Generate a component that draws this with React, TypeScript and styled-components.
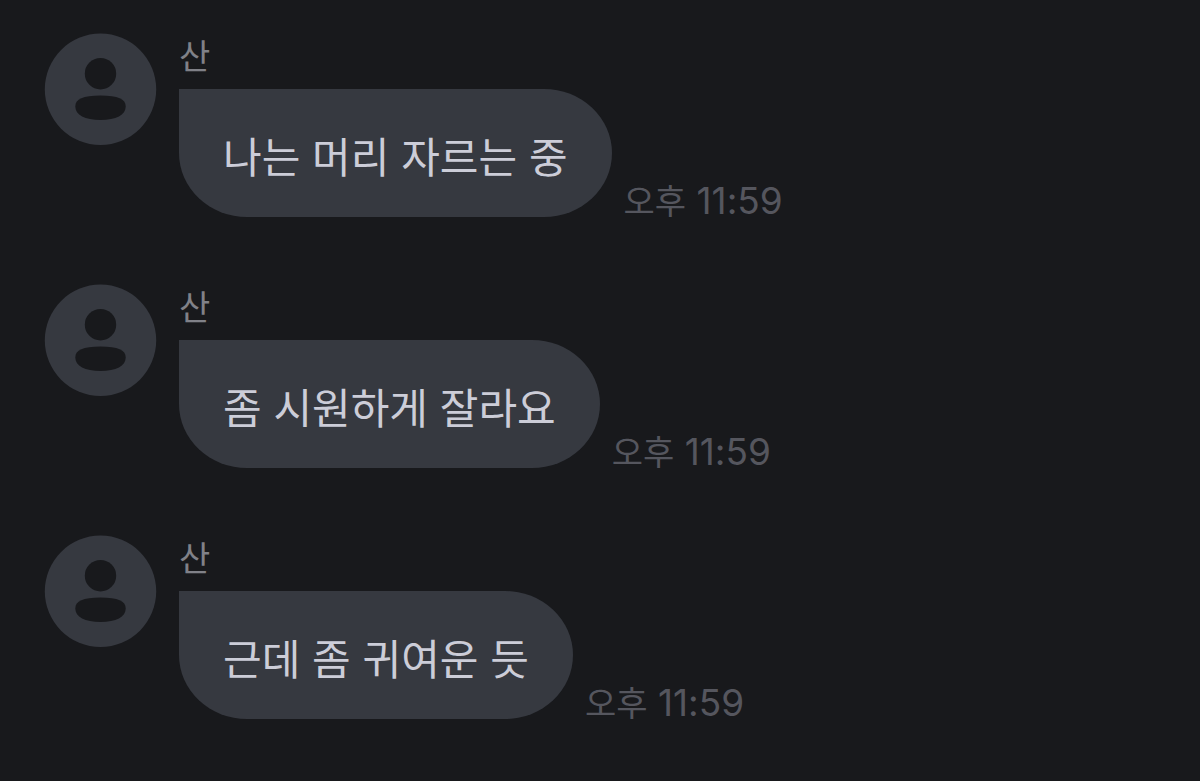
import React from 'react';
import styled, { createGlobalStyle } from 'styled-components';

const GlobalStyle = createGlobalStyle`
  *, *::before, *::after { box-sizing: border-box; }
  body {
    margin: 0;
    background: #18191c;
    font-family: Inter, "Noto Sans CJK KR", sans-serif;
  }
`;

const MessageList = styled.ol`
  display: flex;
  flex-direction: column;
  gap: 66px;
  min-height: 100vh;
  margin: 0;
  padding: 32px 44px;
  list-style: none;
`;

const Message = styled.li`
  display: flex;
  align-items: flex-start;
  gap: 22px;
`;

const Avatar = styled.svg`
  flex: none;
  width: 113px;
  height: 113px;
`;

const Content = styled.div`
  flex: 1;
  min-width: 0;
`;

const Sender = styled.div`
  height: 57px;
  padding-top: 5px;
  color: #808188;
  font-size: 34px;
  line-height: 40px;
`;

const BubbleRow = styled.div`
  display: flex;
  align-items: flex-end;
  gap: 12px;
`;

const Bubble = styled.p`
  margin: 0;
  padding: 41px 44px 31px;
  border-radius: 0 68px 68px 68px / 0 64px 64px 64px;
  background: #363940;
  color: #cccdd8;
  font-size: 42px;
  line-height: 56px;
`;

const Time = styled.time`
  color: #55565e;
  font-size: 37px;
  line-height: 30px;
  white-space: nowrap;
`;

const Period = styled.span`
  font-size: 34px;
`;

const messages = [
  { sender: '산', text: '나는 머리 자르는 중', period: '오후', clock: '11:59' },
  { sender: '산', text: '좀 시원하게 잘라요', period: '오후', clock: '11:59' },
  { sender: '산', text: '근데 좀 귀여운 듯', period: '오후', clock: '11:59' },
];

export default function App() {
  return (
    <>
      <GlobalStyle />
      <MessageList>
        {messages.map((message) => (
          <Message key={message.text}>
            <Avatar viewBox="0 0 113 113" aria-hidden="true">
              <circle cx="56.5" cy="57.3" r="55.7" fill="#363940" />
              <circle cx="56.5" cy="41.7" r="15.7" fill="#18191c" />
              <path d="M56.5 63.5C74 63.5 81.7 67 81.7 74.5C81.7 83 72 88 56.5 88S31.3 83 31.3 74.5C31.3 67 39 63.5 56.5 63.5Z" fill="#18191c" />
            </Avatar>
            <Content>
              <Sender>{message.sender}</Sender>
              <BubbleRow>
                <Bubble>{message.text}</Bubble>
                <Time dateTime="23:59">
                  <Period>{message.period}</Period> {message.clock}
                </Time>
              </BubbleRow>
            </Content>
          </Message>
        ))}
      </MessageList>
    </>
  );
}
